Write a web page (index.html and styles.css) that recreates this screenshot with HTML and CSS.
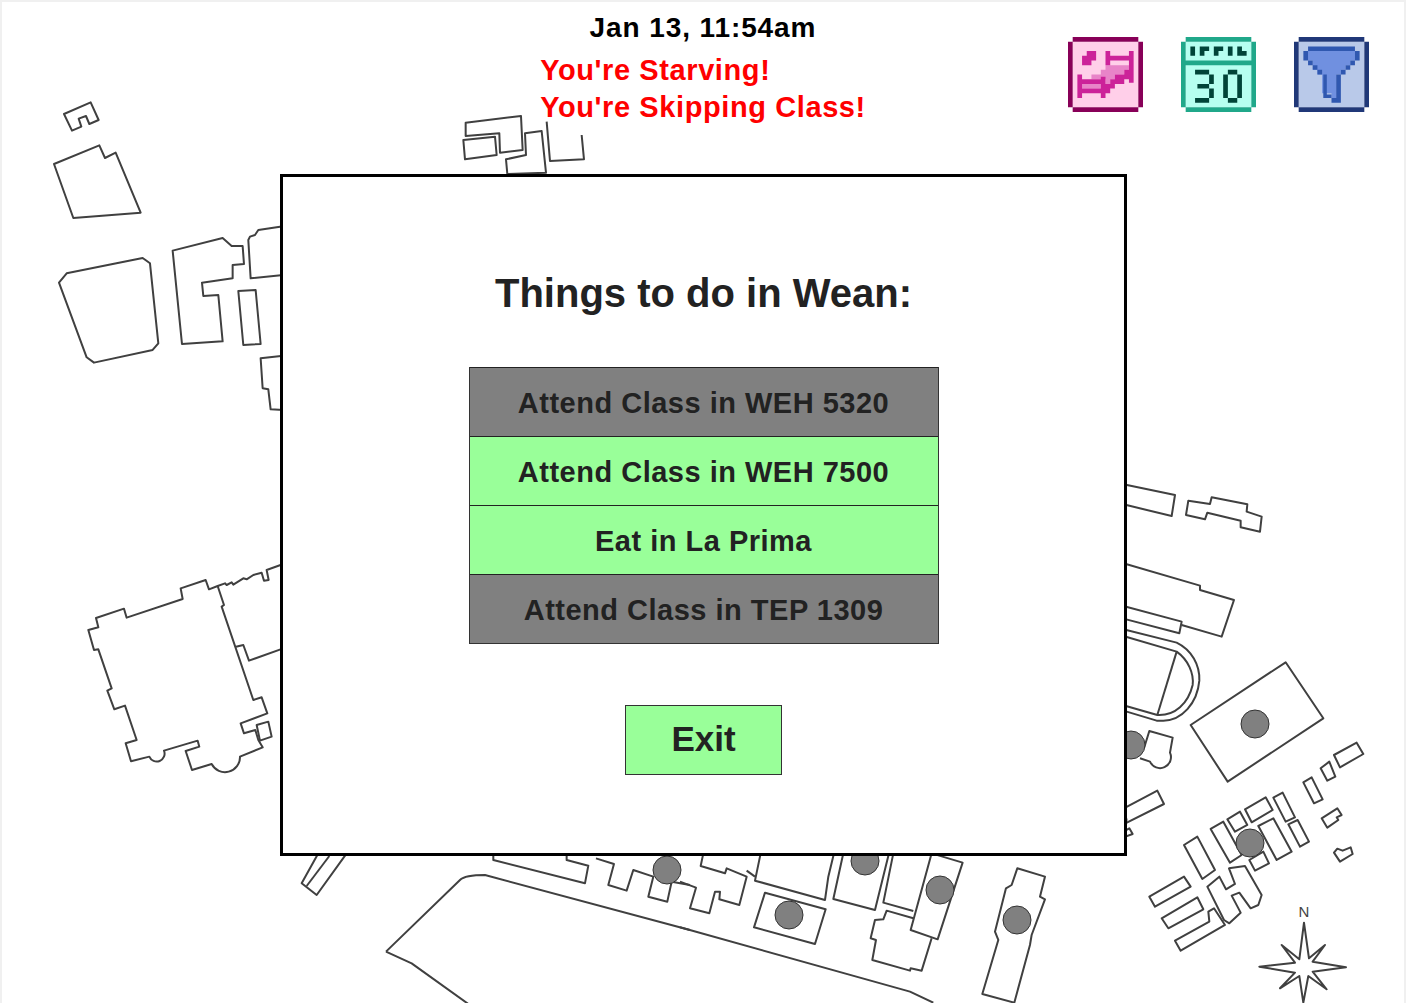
FILE: index.html
```html
<!DOCTYPE html>
<html lang="en">
<head>
    <meta charset="UTF-8">
    <meta name="viewport" content="width=device-width, initial-scale=1.0">
    <title>Campus Map</title>
    <link rel="stylesheet" href="styles.css">
</head>
<body>
    <div class="page">
        <!-- Campus map, lies under everything else -->
        <svg class="map" width="1406" height="1003" viewBox="0 0 1406 1003">
            <g transform="translate(450 0) scale(0.3333)">
                <polygon points="47,368 213,348 218,450 150,458 148,400 47,408"/>
                <polygon points="40,420 135,410 140,465 45,478"/>
                <polygon points="168,478 228,465 225,400 275,393 288,518 172,522"/>
                <polyline points="290,365 300,483 402,478 395,405"/>
            </g>
            <g transform="translate(0 90) scale(0.3333)">
                <polygon points="192,72 272,37 296,90 268,102 258,78 236,86 244,110 216,122"/>
                <polygon points="162,222 298,166 315,204 347,188 422,368 220,384"/>
                <polygon points="177,578 200,550 428,504 450,520 475,760 458,780 282,818 260,802"/>
                <polygon points="518,482 668,444 695,468 728,468 732,522 698,525 698,565 606,578 610,618 655,615 668,754 546,762"/>
                <polygon points="715,603 767,600 782,762 730,765"/>
                <polygon points="850,409 775,420 765,435 750,440 745,450 752,565 850,555"/>
                <polygon points="850,797 782,805 788,895 805,898 812,958 850,960"/>
            </g>
            <g transform="translate(70 550) scale(0.3333)">
                <path d="M55,240 L85,232 L78,204 L162,176 L170,203 L338,147 L332,115 L407,90 L417,118 L443,108 L462,165 L455,170 L550,450 L575,442 L592,490 L512,520 L522,550 L556,540 L565,570 L578,592 L510,620 A45,45 0 0 1 425,642 L366,660 L347,603 L388,590 L383,572 L282,602 A22,22 0 0 1 238,620 L183,634 L167,580 L200,570 L165,467 L133,478 L112,422 L125,415 L85,298 L72,300 Z"/>
                <polyline points="443,108 465,100 470,105 485,97 490,104 520,85 530,88 550,75 575,68 582,92 596,90 590,60 640,42"/>
                <polyline points="498,290 520,285 537,332 640,295"/>
                <polygon points="560,525 595,515 605,560 570,572"/>
            </g>
            <g transform="translate(1120 470) scale(0.3333)">
                <polyline points="10,43 165,75 155,138 10,103"/>
                <polygon points="205,92 270,102 275,82 382,103 380,125 425,140 420,185 362,172 362,152 262,128 255,148 198,135"/>
                <polyline points="10,280 240,347 240,360 342,390 305,500 185,465"/>
                <polyline points="10,408 185,455 178,490 10,446"/>
                <path d="M10,478 L170,518 C215,540 240,585 238,632 C232,700 185,752 130,752 L110,752 L10,722"/>
                <path d="M10,498 L170,545 C205,570 222,610 218,645 C205,700 165,738 112,735 L10,706"/>
                <line x1="170" y1="545" x2="112" y2="735"/>
                <polygon points="497,577 610,745 323,935 212,765"/>
                <path d="M72,835 L88,783 L158,803 L150,848 A25,25 0 0 1 90,875 L60,865"/>
            </g>
            <g transform="translate(1120 730) scale(0.3333)">
                <polyline points="10,236 112,182 132,222 10,283"/>
                <polyline points="10,305 28,295 38,312 10,322"/>
                <polygon points="642,75 710,38 730,72 660,112"/>
                <polygon points="602,115 628,95 646,140 622,152"/>
                <polygon points="550,157 575,142 608,208 582,220"/>
                <polygon points="605,265 652,235 665,255 650,262 655,270 622,293"/>
                <polygon points="642,368 652,356 668,362 692,352 698,372 660,395"/>
                <polygon points="375,238 437,202 458,240 395,277"/>
                <polygon points="460,203 488,188 525,262 497,275"/>
                <polygon points="505,283 533,270 567,335 540,350"/>
                <polygon points="322,268 360,245 382,285 345,305"/>
                <polygon points="415,288 460,265 515,365 470,390"/>
                <polygon points="272,297 310,275 365,375 330,398"/>
                <polygon points="388,390 430,365 447,400 405,422"/>
                <polygon points="192,345 232,320 285,420 247,447"/>
                <polygon points="262,470 298,440 318,478 345,462 327,415 375,408 425,495 415,525 392,535 358,488 335,497 362,548 328,580 312,570"/>
                <polygon points="88,500 192,440 212,470 105,530"/>
                <polygon points="125,565 232,502 250,538 145,595"/>
                <polygon points="165,632 268,575 265,545 282,535 315,585 182,662"/>
                <polygon class="star" points="552,578 567,685 615,645 578,695 678,712 578,725 620,778 565,738 550,818 538,738 480,775 525,728 418,710 525,698 485,645 538,688"/>
            </g>
            <g transform="translate(290 850) scale(0.3333)">
                <polygon points="85,10 35,100 80,135 170,10"/>
                <line x1="118" y1="18" x2="50" y2="108"/>
                <path d="M288,305 L510,90 Q525,75 585,75 L1200,240"/>
                <polyline points="288,305 365,340 535,462"/>
                <polyline points="610,10 610,30 885,100 895,47 830,30 830,10"/>
                <polyline points="918,25 972,42 955,105 1010,122 1030,60 1090,80 1075,140 1132,155 1145,95 1200,105"/>
            </g>
            <g transform="translate(680 850) scale(0.3333)">
                <polyline points="0,232 690,425 760,458"/>
                <polyline points="0,95 48,113 30,175 88,190 105,125 120,125 118,148 178,165 200,80 140,55 135,70 62,48 70,10"/>
                <line x1="200" y1="62" x2="225" y2="80"/>
                <polyline points="242,10 225,92 435,150 445,80 462,10"/>
                <polygon points="255,128 437,178 405,282 222,232"/>
                <polyline points="490,10 460,147 585,180 627,10"/>
                <polyline points="640,10 610,158 700,183"/>
                <polyline points="700,205 620,182 610,208 585,210 572,265 588,270 577,330 690,362 692,355 725,362 755,265"/>
                <polygon points="755,10 692,240 773,268 848,38"/>
                <polygon points="1012,55 1095,80 1080,140 1095,148 1055,255 1050,285 1003,458 907,432 955,270 945,245 978,115 995,105"/>
            </g>
            <circle class="dot" cx="1255" cy="724" r="14"/>
            <circle class="dot" cx="1131" cy="745" r="14"/>
            <circle class="dot" cx="1113" cy="820" r="14"/>
            <circle class="dot" cx="1250" cy="843" r="14"/>
            <circle class="dot" cx="667" cy="870" r="14"/>
            <circle class="dot" cx="865" cy="861" r="14"/>
            <circle class="dot" cx="940" cy="890" r="14"/>
            <circle class="dot" cx="789" cy="915" r="14"/>
            <circle class="dot" cx="1017" cy="920" r="14"/>
            <text class="north" x="1304" y="917">N</text>
        </svg>

        <header class="top-bar">
            <div></div>
            <div class="status">
                <div class="clock">Jan 13, 11:54am</div>
                <div class="alert">You're Starving!</div>
                <div class="alert">You're Skipping Class!</div>
            </div>
            <div class="tools">
                <!-- Stairs -->
                <svg class="tool" viewBox="0 0 32 32">
                    <rect x="2" y="2" width="28" height="28" fill="#ffcfe9"/>
                    <path fill="#880058" d="M2 0h28v2H2zM2 30h28v2H2zM0 2h2v28H0zM30 2h2v28h-2z"/>
                    <path fill="#e884c8" d="M16 12h10v2H16zM14 14h10v2H14zM10 16h10v2H10zM16 18h2v2h-2zM6 20h8v2H6z"/>
                    <path fill="#cc2299" d="M8 6h4v4h-2v2H6V8h2zM16 6h2v6h-2zM26 6h2v13.500h-2zM18 8h8v2h-8zM24 14h2v2h-2zM20 16h6v2h-6zM18 18h6v2h-6zM16 20h4v2h-4zM4 16h2v10H4zM14 17h2v9h-2zM6 18h10v2H6zM6 22h12v2H6z"/>
                </svg>
                <!-- Calendar -->
                <svg class="tool" viewBox="0 0 32 32">
                    <rect x="2" y="2" width="28" height="28" fill="#b6fff0"/>
                    <path fill="#20a88a" d="M2 0h28v2H2zM2 30h28v2H2zM0 2h2v28H0zM30 2h2v28h-2zM2 10h28v2H2z"/>
                    <path fill="#004438" d="M4 4h2v4H4zM8 4h4v2h-2v2H8zM14 4h4v2h-2v2h-2zM20 4h2v4h-2zM24 4h2v2h2v2h-4zM6 14h6v2H6zM12 16h2v4h-2zM7 20h5v2H7zM12 22h2v4h-2zM6 26h6v2H6zM20 14h4v2h-4zM18 16h2v10h-2zM24 16h2v10h-2zM20 26h4v2h-4z"/>
                </svg>
                <!-- Filter -->
                <svg class="tool" viewBox="0 0 32 32">
                    <rect x="2" y="2" width="28" height="28" fill="#b9c9e9"/>
                    <path fill="#203878" d="M2 0h28v2H2zM2 30h28v2H2zM0 2h2v28H0zM30 2h2v28h-2z"/>
                    <path fill="#7090e0" d="M6 6h20v4h-2v2h-2v2h-2v2h-2v10h-2v-2h-4V16h-2v-2h-2v-2H8v-2H6z"/>
                    <path fill="#3058b0" d="M6 4h20v2H6zM4 6h2v4H4zM26 6h2v4h-2zM6 10h2v2H6zM24 10h2v2h-2zM8 12h2v2H8zM22 12h2v2h-2zM10 14h2v2h-2zM20 14h2v2h-2zM12.500 16H14v8.500h2V26h2V16h2v12h-4v-2h-3.500z"/>
                </svg>
            </div>
        </header>

        <section class="dialog">
            <h2>Things to do in Wean:</h2>
            <div class="option-list">
                <div class="option option-off">Attend Class in WEH 5320</div>
                <div class="option option-on">Attend Class in WEH 7500</div>
                <div class="option option-on">Eat in La Prima</div>
                <div class="option option-off">Attend Class in TEP 1309</div>
            </div>
            <button class="exit-btn" type="button">Exit</button>
        </section>
    </div>
</body>
</html>
```

FILE: styles.css
```css
/* General Styles */
html, body {
    margin: 0;
    background-color: #f0f0f0;
}
body {
    font-family: 'Liberation Sans', Arial, sans-serif;
    overflow: hidden;
}
.page {
    position: relative;
    width: 1402px;
    height: 1001px;
    margin: 2px 2px 0;
    background-color: white;
    overflow: hidden;
    display: flex;
    flex-direction: column;
}

/* Map */
.map {
    position: absolute;
    left: -2px;
    top: -2px;
}
.map polygon, .map polyline, .map path, .map line {
    fill: none;
    stroke: #404040;
    stroke-width: 6;
    stroke-linejoin: round;
}
.map .star {
    fill: white;
}
.map .dot {
    fill: #808080;
    stroke: #333;
    stroke-width: 1;
}
.map .north {
    font-size: 15px;
    fill: #444;
    text-anchor: middle;
}

/* Header */
.top-bar {
    position: relative;
    height: 172px;
    flex-shrink: 0;
    display: grid;
    grid-template-columns: 1fr auto 1fr;
}
.status {
    padding-top: 9px;
    font-weight: bold;
}
.clock {
    margin-bottom: 8px;
    font-size: 28px;
    line-height: 33px;
    letter-spacing: 0.9px;
    text-align: center;
    color: black;
}
.alert {
    font-size: 29px;
    line-height: 36.5px;
    letter-spacing: 0.6px;
    color: red;
}
.tools {
    display: flex;
    justify-content: flex-end;
    align-items: flex-start;
    gap: 38px;
    padding: 35px 35px 0 0;
}
.tool {
    width: 75px;
    height: 75px;
}

/* Dialog */
.dialog {
    position: relative;
    box-sizing: border-box;
    width: 847px;
    height: 682px;
    margin-left: 278px;
    border: 3px solid black;
    background-color: white;
    display: flex;
    flex-direction: column;
    align-items: center;
}
.dialog h2 {
    margin: 93px 0 51px;
    font-size: 40px;
    line-height: 46px;
    color: #222;
}

/* Options */
.option-list {
    width: 470px;
    border: solid #333;
    border-width: 0 1px 1px;
    box-sizing: border-box;
}
.option {
    height: 69px;
    padding-top: 2px;
    display: flex;
    align-items: center;
    justify-content: center;
    font-size: 29px;
    letter-spacing: 0.5px;
    font-weight: bold;
    color: #222;
    border-top: 1px solid #222;
    box-sizing: border-box;
}
.option-off {
    background-color: #808080;
}
.option-on {
    background-color: #99ff99;
}

/* Exit */
.exit-btn {
    width: 157px;
    height: 70px;
    margin-top: 61px;
    padding-bottom: 4px;
    border: 1px solid #333;
    background-color: #99ff99;
    font-family: inherit;
    font-size: 35px;
    font-weight: bold;
    color: #222;
}
```
